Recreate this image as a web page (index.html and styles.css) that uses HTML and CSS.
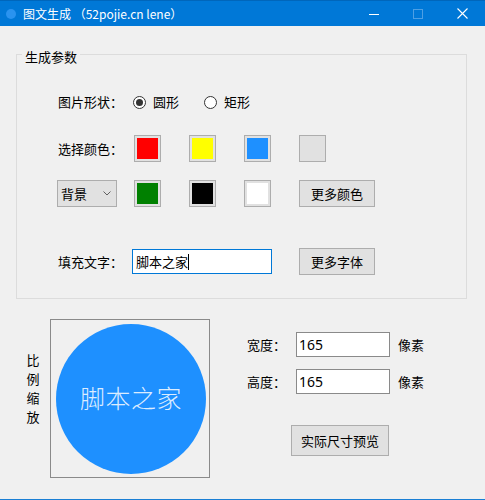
FILE: index.html
```html
<!DOCTYPE html>
<html lang="zh-CN">
<head>
<meta charset="utf-8">
<title>图文生成</title>
<link rel="stylesheet" href="styles.css">
</head>
<body>
<div class="window">
  <div class="titlebar">
    <span class="app-icon"></span>
    <span class="title">图文生成 （52pojie.cn lene）</span>
    <div class="controls">
      <span class="ctl"><svg width="10" height="10" viewBox="0 0 10 10"><path d="M0 5.5H10" stroke="#fff" stroke-width="1"/></svg></span>
      <span class="ctl"><svg width="10" height="10" viewBox="0 0 10 10"><rect x="0.5" y="0.5" width="9" height="9" fill="none" stroke="#4d9fe4" stroke-width="1"/></svg></span>
      <span class="ctl"><svg width="11" height="11" viewBox="0 0 11 11"><path d="M0.5 0.5L10.5 10.5M10.5 0.5L0.5 10.5" stroke="#fff" stroke-width="1.1"/></svg></span>
    </div>
  </div>

  <fieldset class="group">
    <legend>生成参数</legend>
    <div class="rows">
      <div class="row row1">
        <span class="label">图片形状：</span>
        <span class="radio checked"><span class="dot"></span></span><span class="rtext">圆形</span>
        <span class="radio r2"></span><span class="rtext">矩形</span>
      </div>

      <div class="row row2">
        <span class="label">选择颜色：</span>
        <div class="swatches">
          <span class="swatch"><span class="fill red"></span></span>
          <span class="swatch"><span class="fill yellow"></span></span>
          <span class="swatch"><span class="fill blue"></span></span>
          <span class="swatch"><span class="fill grey"></span></span>
        </div>
      </div>

      <div class="row row3">
        <div class="select">
          <span>背景</span>
          <svg width="8" height="5" viewBox="0 0 8 5"><path d="M0.5 0.5L4 4L7.5 0.5" fill="none" stroke="#606060" stroke-width="1"/></svg>
        </div>
        <div class="swatches">
          <span class="swatch"><span class="fill green"></span></span>
          <span class="swatch"><span class="fill black"></span></span>
          <span class="swatch"><span class="fill white"></span></span>
          <span class="btn btn-more">更多颜色</span>
        </div>
      </div>

      <div class="row row4">
        <span class="label label4">填充文字：</span>
        <div class="textbox focused">脚本之家<span class="caret"></span></div>
        <span class="btn btn-font">更多字体</span>
      </div>
    </div>
  </fieldset>

  <div class="bottom">
    <div class="vert">比<br>例<br>缩<br>放</div>
    <div class="preview">
      <div class="circle"><span>脚本之家</span></div>
    </div>
    <div class="sizeform">
      <div class="srow first">
        <span class="slabel">宽度：</span>
        <div class="textbox num">165</div>
        <span class="unit">像素</span>
      </div>
      <div class="srow second">
        <span class="slabel">高度：</span>
        <div class="textbox num">165</div>
        <span class="unit">像素</span>
      </div>
      <span class="btn btn-preview">实际尺寸预览</span>
    </div>
  </div>
</div>
</body>
</html>
```

FILE: styles.css
```css
* { box-sizing: border-box; }

html, body {
  margin: 0;
  padding: 0;
}

body {
  width: 485px;
  height: 500px;
  overflow: hidden;
  font-family: "Noto Sans CJK SC", "Noto Sans", sans-serif;
  font-size: 13px;
  color: #000;
  background: #f0f0f0;
}

.window {
  width: 485px;
  height: 500px;
  background: #f0f0f0;
  border-bottom: 1px solid #1a7fd4;
}

/* title bar */
.titlebar {
  height: 26px;
  background: #0078d7;
  border-top: 1px solid #0066bb;
  display: flex;
  align-items: center;
  color: #fff;
}

.app-icon {
  width: 10px;
  height: 10px;
  border-radius: 50%;
  background: #2a93ef;
  margin-left: 6px;
}

.title {
  margin-left: 7px;
  font-size: 12px;
  line-height: 14px;
}

.controls {
  margin-left: auto;
  margin-right: 1px;
  display: flex;
}

.ctl {
  width: 44px;
  height: 25px;
  display: flex;
  align-items: center;
  justify-content: center;
}
.ctl svg { display: block; }

/* group box */
.group {
  margin: 18px 0 0 16px;
  width: 451px;
  border: 1px solid #dcdcdc;
  padding: 0 0 23px 0;
  min-width: 0;
}

.group legend {
  margin-left: 5px;
  padding: 6px 3px 0 3px;
  font-size: 13px;
  line-height: 14px;
}

.rows {
  padding-left: 41px;
}

.row {
  display: flex;
  align-items: center;
}

.row1 { height: 20px; margin-top: 28px; }
.row2 { height: 27px; margin-top: 23px; }
.row3 { height: 27px; margin-top: 18px; }
.row4 { height: 27px; margin-top: 41px; }

.label {
  width: 75px;
  line-height: 16px;
  flex: none;
}
.label4 { width: 74px; }

/* radios */
.radio {
  width: 13px;
  height: 13px;
  border: 1px solid #333;
  border-radius: 50%;
  background: #fff;
  display: flex;
  align-items: center;
  justify-content: center;
  flex: none;
}
.radio .dot {
  width: 7px;
  height: 7px;
  border-radius: 50%;
  background: #333;
}
.rtext {
  margin-left: 7px;
  width: 51px;
  line-height: 16px;
}

/* swatches */
.swatches {
  display: flex;
  gap: 28px;
  margin-left: 1px;
  align-items: center;
}

.swatch {
  width: 27px;
  height: 27px;
  border: 1px solid #adadad;
  background: #e1e1e1;
  padding: 2px;
  display: block;
}
.swatch .fill {
  display: block;
  width: 100%;
  height: 100%;
}
.red { background: #ff0000; }
.yellow { background: #ffff00; }
.blue { background: #1e90ff; }
.grey { background: #e1e1e1; }
.green { background: #008000; }
.black { background: #000000; }
.white { background: #ffffff; }

/* dropdown */
.select {
  width: 60px;
  height: 27px;
  margin-left: -1px;
  margin-right: 16px;
  border: 1px solid #adadad;
  background: #e1e1e1;
  display: flex;
  align-items: center;
  padding: 0 5px 0 3px;
  justify-content: space-between;
  flex: none;
}
.select svg { display: block; }

/* buttons */
.btn {
  display: flex;
  align-items: center;
  justify-content: center;
  border: 1px solid #adadad;
  background: #e1e1e1;
  line-height: 16px;
  flex: none;
}
.btn-more, .btn-font {
  width: 76px;
  height: 27px;
}
.btn-font { margin-left: 27px; }

/* textboxes */
.textbox {
  background: #fff;
  border: 1px solid #7a7a7a;
  display: flex;
  align-items: center;
  padding-left: 3px;
  flex: none;
}
.row4 .textbox {
  width: 140px;
  height: 25px;
}
.textbox.focused {
  border-color: #0078d7;
}
.caret {
  display: inline-block;
  width: 1px;
  height: 16px;
  background: #000;
}

/* bottom section */
.bottom {
  display: flex;
  align-items: flex-start;
  padding-left: 26px;
  margin-top: 20px;
}

.vert {
  width: 14px;
  margin-top: 31px;
  line-height: 19px;
  text-align: center;
  font-size: 13px;
}

.preview {
  margin-left: 10px;
  width: 160px;
  height: 159px;
  border: 1px solid #8a8a8a;
  padding: 4px 0 0 5px;
}

.circle {
  width: 150px;
  height: 150px;
  border-radius: 50%;
  background: #1e90ff;
  display: flex;
  align-items: center;
  justify-content: center;
}
.circle span {
  color: rgba(255, 255, 255, 0.85);
  font-size: 25px;
  font-weight: 300;
  line-height: 30px;
  margin-top: -4px;
  letter-spacing: 0.5px;
}

.sizeform {
  margin-left: 37px;
  display: flex;
  flex-direction: column;
  align-items: flex-start;
}

.srow {
  display: flex;
  align-items: center;
  height: 25px;
}
.srow.first { margin-top: 13px; }
.srow.second { margin-top: 12px; }

.slabel {
  width: 49px;
  line-height: 16px;
}

.textbox.num {
  width: 94px;
  height: 25px;
  padding-left: 2px;
  font-family: "Noto Sans", "Noto Sans CJK SC", sans-serif;
  font-size: 14px;
  border-color: #8a8a8a;
}

.unit {
  margin-left: 8px;
  line-height: 16px;
}

.btn-preview {
  margin-top: 31px;
  margin-left: 44px;
  width: 98px;
  height: 31px;
}
```
